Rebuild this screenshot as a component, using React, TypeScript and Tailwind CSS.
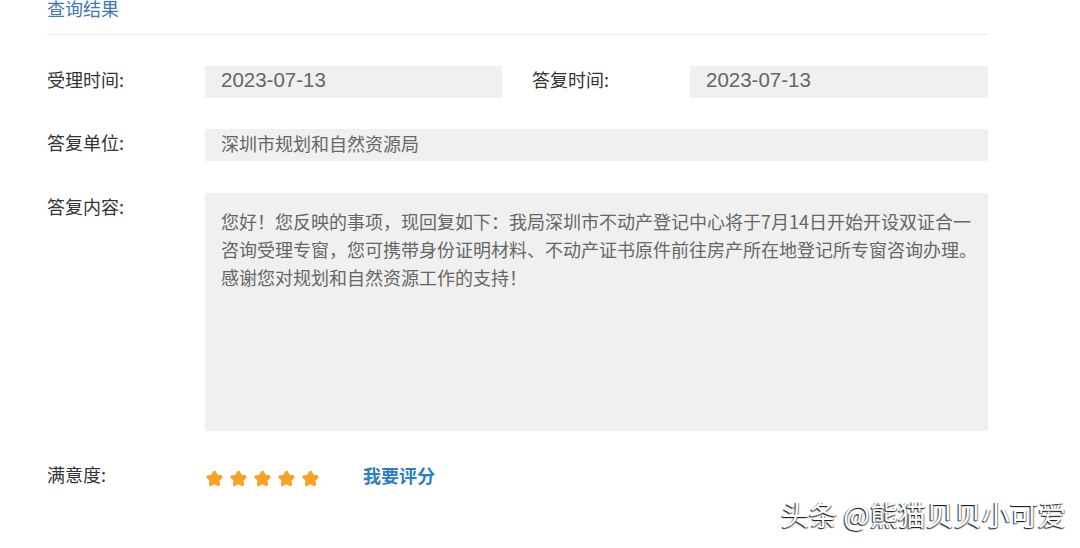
import React from "react";

const cjk = "font-['Noto_Sans_CJK_SC','Noto_Sans',sans-serif]";

function Star() {
  return (
    <svg width="17" height="17" viewBox="0 0 24 24">
      <path
        d="M12 2.2c.5 0 .9.3 1.1.7l2.5 5.1 5.6.8c.9.1 1.3 1.2.6 1.9l-4.1 3.9 1 5.6c.2.9-.8 1.6-1.6 1.2L12 18.7l-5.1 2.7c-.8.4-1.8-.3-1.6-1.2l1-5.6-4.1-3.9c-.7-.7-.3-1.8.6-1.9l5.6-.8 2.5-5.1c.2-.4.6-.7 1.1-.7z"
        fill="#f6a326"
        stroke="#f6a326"
        strokeWidth="2.5"
        strokeLinejoin="round"
      />
    </svg>
  );
}

function Label({ children }: { children: React.ReactNode }) {
  return (
    <div className="w-[158px] shrink-0 h-[32px] pb-[5px] flex items-center text-[18px] text-[#333]">
      {children}
    </div>
  );
}

function Box({ children, className = "" }: { children: React.ReactNode; className?: string }) {
  return (
    <div className={`h-[32px] pb-[4px] bg-[#f0f0f0] flex items-center pl-[16px] text-[#666] ${className}`}>
      {children}
    </div>
  );
}

export default function App() {
  return (
    <div className={`relative w-[1080px] h-[548px] bg-white overflow-hidden ${cjk}`}>
      <div className="ml-[47px] w-[941px] flex flex-col">
        <div className="h-[35px] border-b border-[#ececec] flex flex-col">
          <div className="-mt-[2px] leading-[20px] text-[18px] text-[#3f7ab3]">查询结果</div>
        </div>

        <div className="mt-[31px] flex">
          <Label>受理时间:</Label>
          <Box className="w-[297px]">
            <span className="font-['Liberation_Sans',Arial,sans-serif] text-[20.5px] leading-none">2023-07-13</span>
          </Box>
          <div className="w-[30px] shrink-0" />
          <Label>答复时间:</Label>
          <Box className="flex-1">
            <span className="font-['Liberation_Sans',Arial,sans-serif] text-[20.5px] leading-none">2023-07-13</span>
          </Box>
        </div>

        <div className="mt-[31px] flex">
          <Label>答复单位:</Label>
          <Box className="flex-1 text-[18px]">深圳市规划和自然资源局</Box>
        </div>

        <div className="mt-[32px] flex">
          <Label>答复内容:</Label>
          <div className="flex-1 h-[238px] bg-[#f0f0f0] pl-[16px] pt-[14px] text-[18px] leading-[28px] text-[#666] whitespace-nowrap">
            您好！您反映的事项，现回复如下：我局深圳市不动产登记中心将于7月14日开始开设双证合一
            <br />
            咨询受理专窗，您可携带身份证明材料、不动产证书原件前往房产所在地登记所专窗咨询办理。
            <br />
            感谢您对规划和自然资源工作的支持！
          </div>
        </div>

        <div className="mt-[30px] flex">
          <Label>满意度:</Label>
          <div className="h-[32px] flex items-center">
            <div className="ml-[1px] mt-[3px] flex gap-[7px]">
              <Star />
              <Star />
              <Star />
              <Star />
              <Star />
            </div>
            <span className="ml-[44px] mb-[4px] text-[18px] font-bold text-[#2d7fc6]">我要评分</span>
          </div>
        </div>
      </div>

      <div className="absolute left-[781px] top-[496px] text-[28px] leading-[36px] text-white [text-shadow:-1px_1px_1px_rgba(0,0,0,0.85),1px_1px_1px_rgba(0,0,0,0.5)]">
        头条 @熊猫贝贝小可爱
      </div>
    </div>
  );
}
